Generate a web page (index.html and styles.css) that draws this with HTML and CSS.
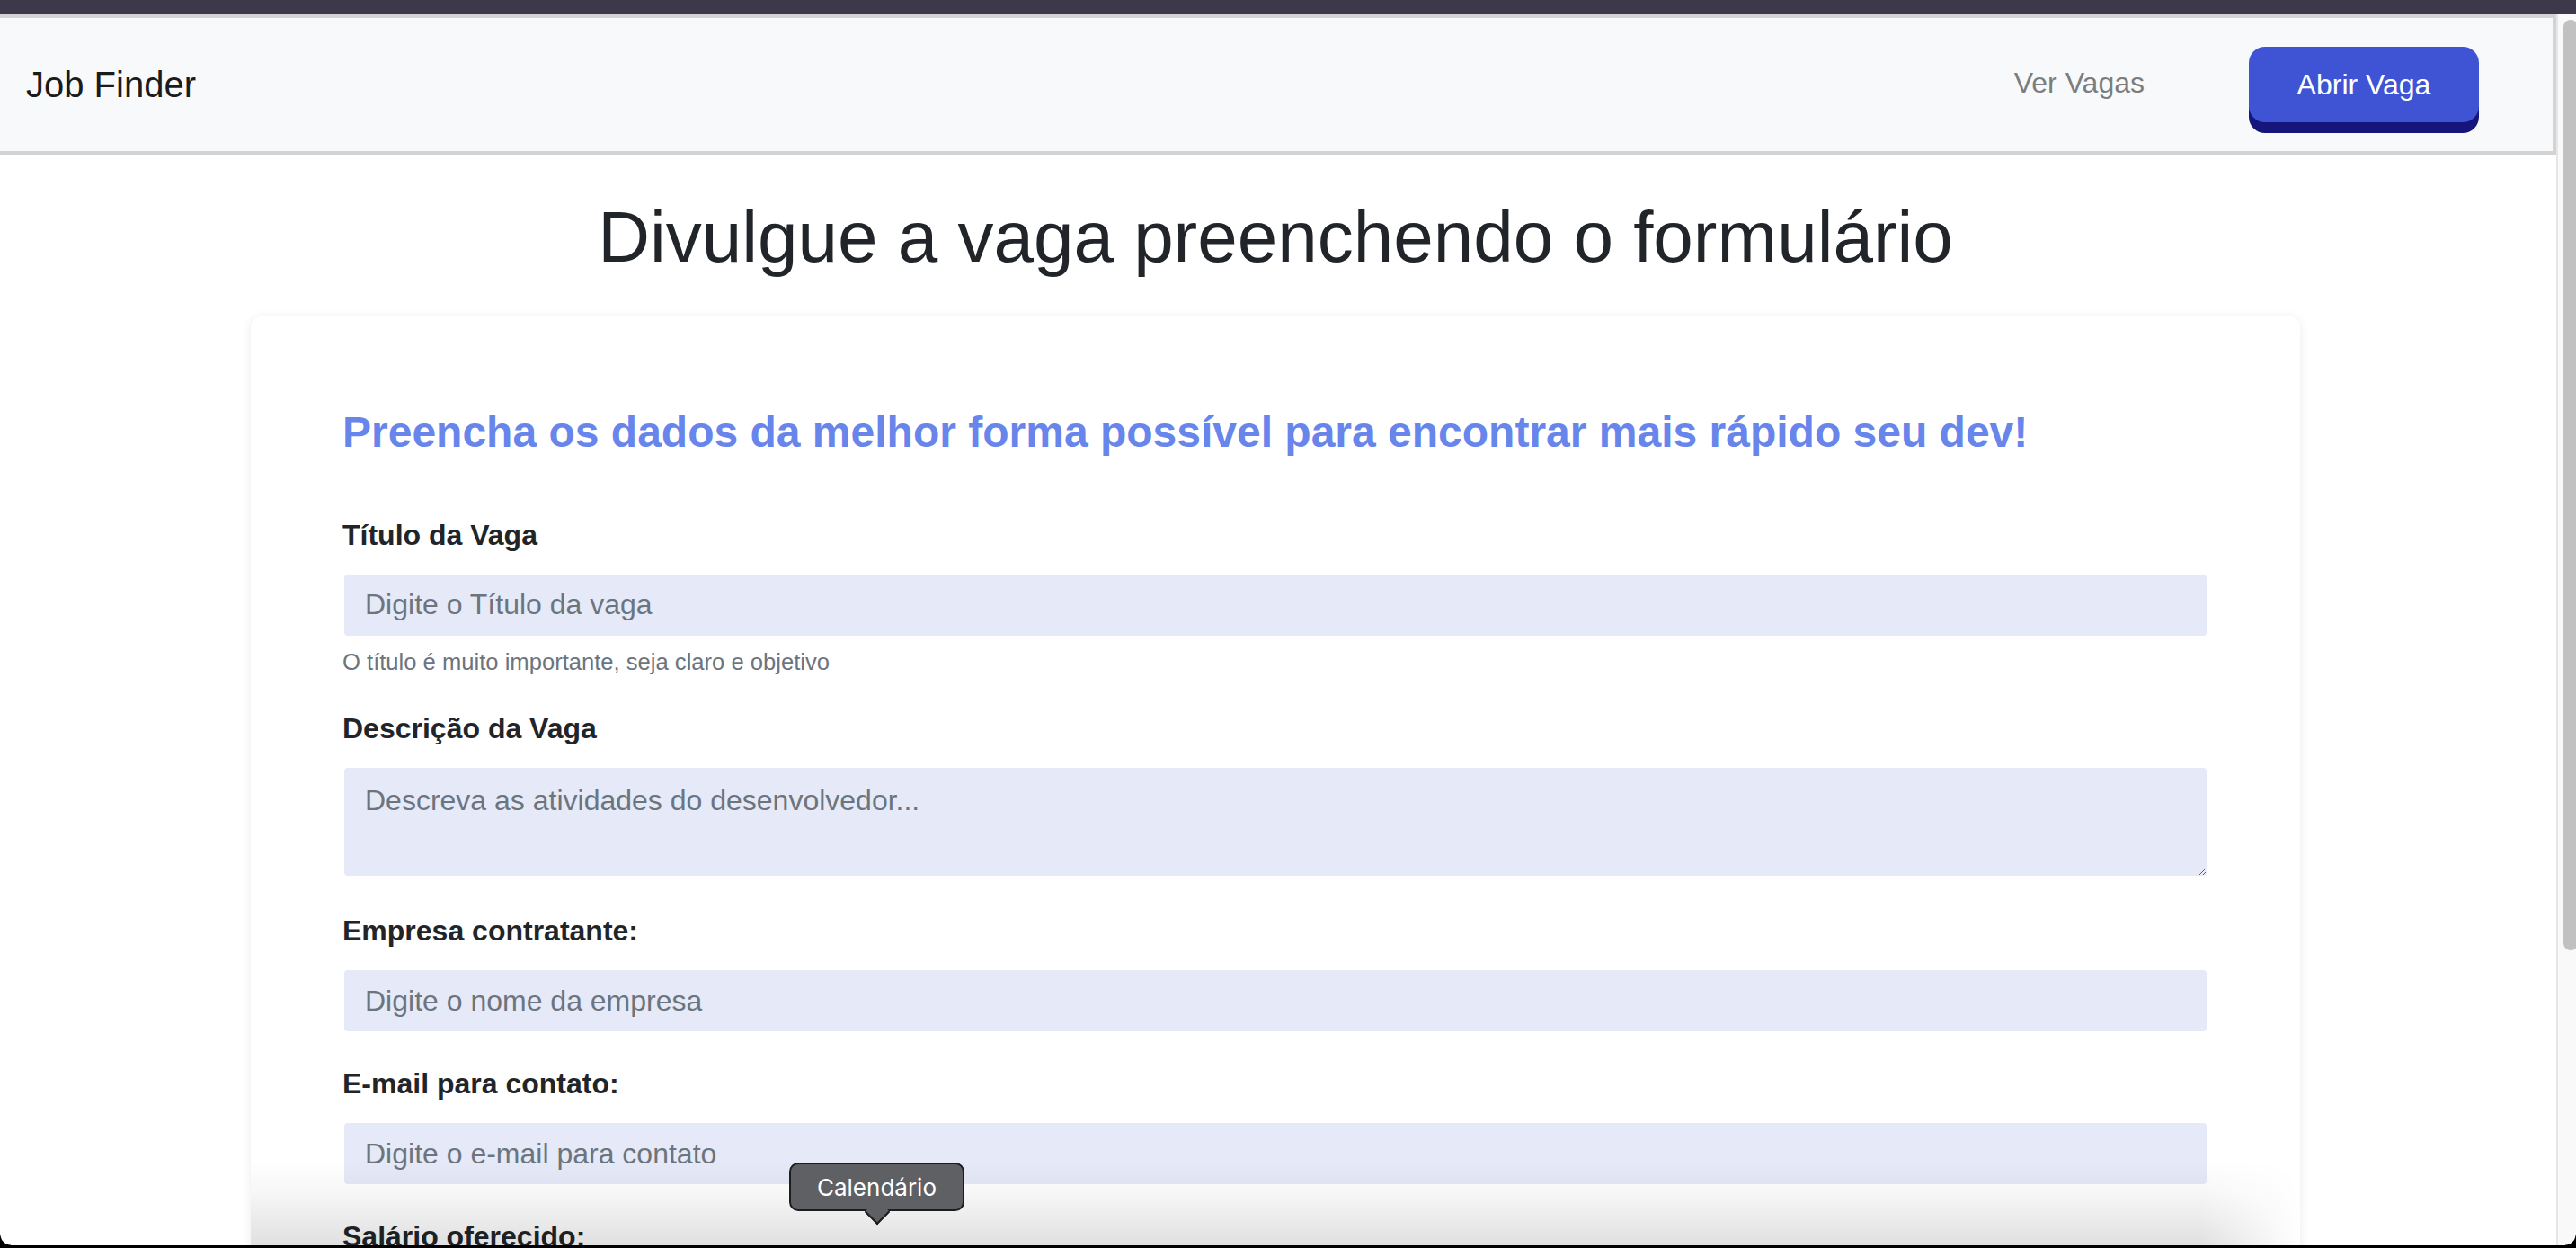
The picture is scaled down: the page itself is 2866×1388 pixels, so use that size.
FILE: index.html
```html
<!DOCTYPE html>
<html lang="pt-BR">
<head>
<meta charset="utf-8">
<title>Job Finder - Abrir Vaga</title>
<link rel="stylesheet" href="styles.css">
</head>
<body>
<div class="window">
  <div class="titlebar"></div>
  <div class="viewport">
    <div class="page">
      <nav class="navbar">
        <a class="brand" href="#">Job Finder</a>
        <div class="nav-right">
          <a class="nav-link" href="#">Ver Vagas</a>
          <a class="btn-open" href="#">Abrir Vaga</a>
        </div>
      </nav>
      <main class="content">
        <h1 class="page-title">Divulgue a vaga preenchendo o formulário</h1>
        <section class="card">
          <h4 class="card-title">Preencha os dados da melhor forma possível para encontrar mais rápido seu dev!</h4>
          <form class="job-form">
            <div class="form-group group-help">
              <label class="label" for="titulo">Título da Vaga</label>
              <input class="field" id="titulo" type="text" placeholder="Digite o Título da vaga">
              <small class="help">O título é muito importante, seja claro e objetivo</small>
            </div>
            <div class="form-group group-area">
              <label class="label" for="descricao">Descrição da Vaga</label>
              <textarea class="field area" id="descricao" placeholder="Descreva as atividades do desenvolvedor..."></textarea>
            </div>
            <div class="form-group">
              <label class="label" for="empresa">Empresa contratante:</label>
              <input class="field" id="empresa" type="text" placeholder="Digite o nome da empresa">
            </div>
            <div class="form-group">
              <label class="label" for="email">E-mail para contato:</label>
              <input class="field" id="email" type="email" placeholder="Digite o e-mail para contato">
            </div>
            <div class="form-group">
              <label class="label" for="salario">Salário oferecido:</label>
              <input class="field" id="salario" type="text" placeholder="Digite o salário">
            </div>
          </form>
        </section>
      </main>
    </div>
    <div class="scrollbar"><div class="thumb"></div></div>
  </div>
  <div class="bottom-shade"></div>
  <div class="tooltip">Calendário<span class="tooltip-arrow"></span></div>
  <div class="window-edge"></div>
  <div class="corner corner-left"></div>
  <div class="corner corner-right"></div>
</div>
</body>
</html>
```

FILE: styles.css
```css
* {
  box-sizing: border-box;
}

html, body {
  margin: 0;
  padding: 0;
  height: 100%;
  overflow: hidden;
  background: #ffffff;
}

body {
  font-family: "Liberation Sans", Arial, Helvetica, sans-serif;
  color: #212529;
}

.window {
  height: 100vh;
  display: flex;
  flex-direction: column;
  overflow: hidden;
}

.titlebar {
  height: 16px;
  flex: none;
  background: #3d394b;
}

.viewport {
  flex: 1;
  min-height: 0;
  display: flex;
}

.page {
  flex: 1;
  min-width: 0;
  overflow: hidden;
}

/* Navbar */
.navbar {
  height: 156px;
  display: flex;
  align-items: center;
  justify-content: space-between;
  background: #f8f9fa;
  border-top: 4px solid #d3d3d3;
  border-bottom: 4px solid #d3d3d3;
  border-right: 4px solid #d3d3d3;
  padding: 0 82px 0 29px;
}

.brand {
  font-size: 40px;
  line-height: 60px;
  color: #1b1b1b;
  text-decoration: none;
}

.nav-right {
  display: flex;
  align-items: center;
}

.nav-link {
  font-size: 32px;
  line-height: 48px;
  color: #7c7d7e;
  text-decoration: none;
  padding-bottom: 4px;
  margin-right: 116px;
}

.btn-open {
  display: flex;
  align-items: center;
  justify-content: center;
  width: 256px;
  height: 84px;
  margin-bottom: 12px;
  border-radius: 18px;
  background: #3e54d4;
  box-shadow: 0 12px 0 #15157c;
  color: #ffffff;
  font-size: 32px;
  text-decoration: none;
  position: relative;
  top: 6px;
}

/* Content */
.content {
  padding: 44px 6px 0 0;
}

.page-title {
  margin: 0 0 40px;
  text-align: center;
  font-size: 80px;
  line-height: 96px;
  font-weight: 400;
  color: #212529;
}

.card {
  width: 2280px;
  margin: 0 auto;
  padding: 100px 102px 0 102px;
  background: #ffffff;
  border-radius: 12px;
  box-shadow: 0 1px 12px rgba(0, 0, 0, 0.08);
  min-height: 1200px;
}

.card-title {
  margin: 0 0 61px;
  font-size: 48px;
  line-height: 57.6px;
  font-weight: 700;
  color: #6785ea;
}

.job-form {
  display: flex;
  flex-direction: column;
}

.form-group {
  display: flex;
  flex-direction: column;
  margin-bottom: 34px;
}

.group-help {
  margin-bottom: 31px;
}

.group-area {
  margin-bottom: 37px;
}

.label {
  font-size: 32px;
  line-height: 48px;
  font-weight: 700;
  color: #212529;
  margin-bottom: 20px;
}

.field {
  display: block;
  margin: 0 2px;
  height: 68px;
  border: none;
  border-radius: 4px;
  background: #e5e9f8;
  padding: 0 23px;
  font-family: "Liberation Sans", Arial, Helvetica, sans-serif;
  font-size: 32px;
  color: #495057;
  outline: none;
}

.field::placeholder {
  color: #6c757d;
  opacity: 1;
}

.area {
  height: 120px;
  padding: 12px 23px;
  line-height: 48px;
  resize: vertical;
}

.help {
  margin-top: 10px;
  font-size: 25.6px;
  line-height: 38.4px;
  color: #6c757d;
}

/* Fake scrollbar */
.scrollbar {
  width: 22px;
  flex: none;
  background: #f9f9f9;
  border-left: 2px solid #e6e6e6;
  padding: 6px 0 0 6px;
  overflow: hidden;
}

.thumb {
  width: 16px;
  height: 1035px;
  border-radius: 8px;
  background: #c1c1c1;
}

/* Overlays */
.bottom-shade {
  position: fixed;
  left: 279px;
  width: 2280px;
  bottom: 3px;
  height: 95px;
  background: linear-gradient(to bottom, rgba(0, 0, 0, 0) 0%, rgba(0, 0, 0, 0.035) 40%, rgba(0, 0, 0, 0.12) 100%);
  -webkit-mask-image: linear-gradient(to right, #000 0, #000 calc(100% - 110px), transparent 100%);
  mask-image: linear-gradient(to right, #000 0, #000 calc(100% - 110px), transparent 100%);
  pointer-events: none;
  z-index: 2;
}

.tooltip {
  position: fixed;
  left: 878px;
  top: 1293px;
  width: 195px;
  height: 54px;
  display: flex;
  align-items: center;
  justify-content: center;
  background: #5f6064;
  border: 2px solid #1d1d1f;
  border-radius: 10px;
  color: #ffffff;
  font-family: Inter, "Liberation Sans", sans-serif;
  font-size: 26px;
  z-index: 5;
}

.tooltip-arrow {
  position: absolute;
  left: 50%;
  bottom: -13px;
  width: 20px;
  height: 20px;
  margin-left: -10px;
  background: #5f6064;
  border-right: 2px solid #1d1d1f;
  border-bottom: 2px solid #1d1d1f;
  transform: rotate(45deg);
}

.window-edge {
  position: fixed;
  left: 0;
  right: 0;
  bottom: 0;
  height: 3px;
  background: #000000;
  z-index: 6;
}

.corner {
  position: fixed;
  bottom: 3px;
  width: 12px;
  height: 12px;
  z-index: 6;
}

.corner-left {
  left: 0;
  background: radial-gradient(circle at 100% 0, transparent 11px, #000 12px);
}

.corner-right {
  right: 0;
  background: radial-gradient(circle at 0 0, transparent 11px, #000 12px);
}
```
